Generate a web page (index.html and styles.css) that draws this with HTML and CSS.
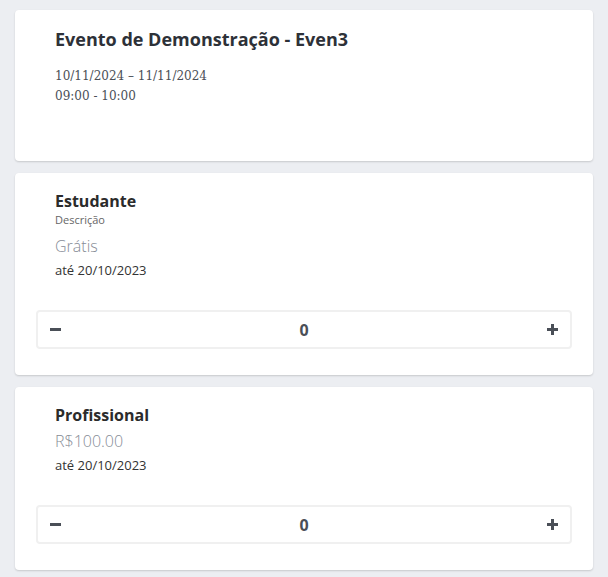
FILE: index.html
```html
<!DOCTYPE html>
<html lang="pt">
<head>
<meta charset="utf-8">
<link rel="stylesheet" href="styles.css">
</head>
<body>
<div class="list">
  <section class="card event">
    <h1 class="event-title">Evento de Demonstração - Even3</h1>
    <div class="event-dates">
      <div>10/11/2024 – 11/11/2024</div>
      <div>09:00 - 10:00</div>
    </div>
  </section>

  <section class="card ticket">
    <h2 class="ticket-name">Estudante</h2>
    <div class="ticket-desc">Descrição</div>
    <div class="ticket-price">Grátis</div>
    <div class="ticket-until">até 20/10/2023</div>
    <div class="counter">
      <button class="counter-btn" aria-label="menos">
        <svg width="11" height="11" viewBox="0 0 11 11"><rect x="0" y="4" width="11" height="3" fill="currentColor"/></svg>
      </button>
      <span class="counter-value">0</span>
      <button class="counter-btn" aria-label="mais">
        <svg width="11" height="11" viewBox="0 0 11 11"><rect x="0" y="4" width="11" height="3" fill="currentColor"/><rect x="4" y="0" width="3" height="11" fill="currentColor"/></svg>
      </button>
    </div>
  </section>

  <section class="card ticket">
    <h2 class="ticket-name">Profissional</h2>
    <div class="ticket-price tight">R$100.00</div>
    <div class="ticket-until">até 20/10/2023</div>
    <div class="counter">
      <button class="counter-btn" aria-label="menos">
        <svg width="11" height="11" viewBox="0 0 11 11"><rect x="0" y="4" width="11" height="3" fill="currentColor"/></svg>
      </button>
      <span class="counter-value">0</span>
      <button class="counter-btn" aria-label="mais">
        <svg width="11" height="11" viewBox="0 0 11 11"><rect x="0" y="4" width="11" height="3" fill="currentColor"/><rect x="4" y="0" width="3" height="11" fill="currentColor"/></svg>
      </button>
    </div>
  </section>
</div>
</body>
</html>
```

FILE: styles.css
```css
* { box-sizing: border-box; }

html, body {
  margin: 0;
  background: #eceef2;
}

body {
  font-family: "Open Sans", "Liberation Sans", sans-serif;
  color: #333;
}

.list {
  display: flex;
  flex-direction: column;
  gap: 12px;
  padding: 10px 15px;
}

.card {
  background: #fff;
  border-radius: 4px;
  box-shadow: 0 1px 2px rgba(0, 0, 0, 0.16);
}

.event {
  height: 151px;
  padding: 17px 40px;
}

.event-title {
  margin: 0;
  font-size: 18px;
  line-height: 24px;
  font-weight: 700;
  color: #2d3138;
}

.event-dates {
  margin-top: 15px;
  font-family: "DejaVu Serif", "Liberation Serif", serif;
  font-size: 12px;
  line-height: 20px;
  color: #4a4f57;
}

.ticket {
  padding: 17px 40px 26px;
}

.ticket-name {
  margin: 0;
  font-size: 16px;
  line-height: 22px;
  font-weight: 700;
  color: #2b2b2b;
}

.ticket-desc {
  font-size: 11px;
  line-height: 15px;
  color: #666;
}

.ticket-price {
  margin-top: 7px;
  font-size: 16px;
  line-height: 24px;
  font-weight: 300;
  color: #868c96;
}

.ticket-price.tight {
  margin-top: 3px;
}

.ticket-until {
  margin-top: 2px;
  font-size: 13px;
  line-height: 20px;
  color: #333;
}

.counter {
  margin: 30px -19px 0;
  height: 39px;
  border: 2px solid #f0f0f0;
  border-radius: 4px;
  display: flex;
  align-items: center;
  justify-content: space-between;
  padding: 0 12px;
}

.counter-btn {
  border: 0;
  background: none;
  padding: 0;
  width: 11px;
  height: 11px;
  color: #4a4f57;
  display: flex;
}

.counter-value {
  font-size: 16px;
  font-weight: 700;
  color: #4a4f57;
  line-height: 20px;
}
```
